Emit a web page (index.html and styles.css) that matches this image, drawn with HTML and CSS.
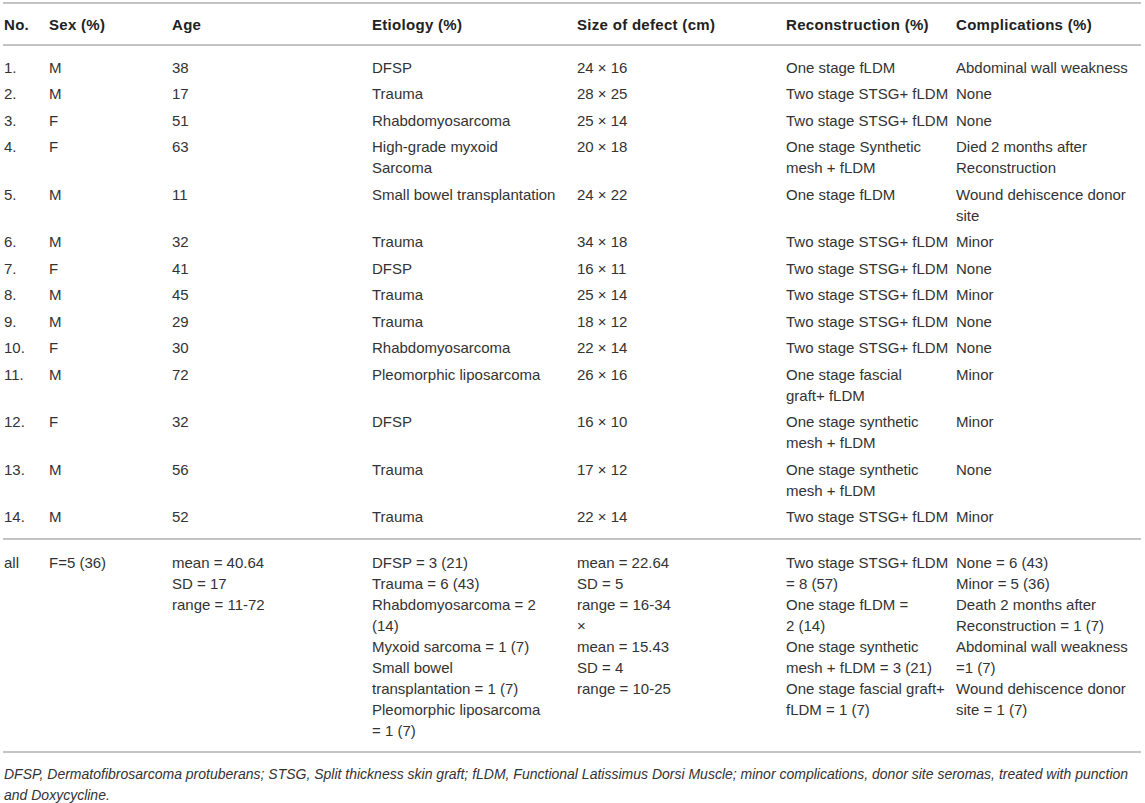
FILE: index.html
```html
<!DOCTYPE html>
<html lang="en">
<head>
    <meta charset="UTF-8">
    <meta name="viewport" content="width=device-width, initial-scale=1.0">
    <title>Patients and reconstruction</title>
    <link rel="stylesheet" href="styles.css">
</head>
<body>
    <div class="table-wrap">
        <table class="data-table">
            <colgroup>
                <col class="c-no">
                <col class="c-sex">
                <col class="c-age">
                <col class="c-etio">
                <col class="c-size">
                <col class="c-recon">
                <col class="c-comp">
            </colgroup>
            <thead>
                <tr>
                    <th>No.</th>
                    <th>Sex (%)</th>
                    <th>Age</th>
                    <th>Etiology (%)</th>
                    <th>Size of defect (cm)</th>
                    <th>Reconstruction (%)</th>
                    <th>Complications (%)</th>
                </tr>
            </thead>
            <tbody>
                <tr class="first">
                    <td>1.</td><td>M</td><td>38</td><td>DFSP</td><td>24 × 16</td>
                    <td>One stage fLDM</td><td>Abdominal wall weakness</td>
                </tr>
                <tr>
                    <td>2.</td><td>M</td><td>17</td><td>Trauma</td><td>28 × 25</td>
                    <td>Two stage STSG+ fLDM</td><td>None</td>
                </tr>
                <tr>
                    <td>3.</td><td>F</td><td>51</td><td>Rhabdomyosarcoma</td><td>25 × 14</td>
                    <td>Two stage STSG+ fLDM</td><td>None</td>
                </tr>
                <tr>
                    <td>4.</td><td>F</td><td>63</td><td>High-grade myxoid<br>Sarcoma</td><td>20 × 18</td>
                    <td>One stage Synthetic<br>mesh + fLDM</td><td>Died 2 months after<br>Reconstruction</td>
                </tr>
                <tr>
                    <td>5.</td><td>M</td><td>11</td><td>Small bowel transplantation</td><td>24 × 22</td>
                    <td>One stage fLDM</td><td>Wound dehiscence donor<br>site</td>
                </tr>
                <tr>
                    <td>6.</td><td>M</td><td>32</td><td>Trauma</td><td>34 × 18</td>
                    <td>Two stage STSG+ fLDM</td><td>Minor</td>
                </tr>
                <tr>
                    <td>7.</td><td>F</td><td>41</td><td>DFSP</td><td>16 × 11</td>
                    <td>Two stage STSG+ fLDM</td><td>None</td>
                </tr>
                <tr>
                    <td>8.</td><td>M</td><td>45</td><td>Trauma</td><td>25 × 14</td>
                    <td>Two stage STSG+ fLDM</td><td>Minor</td>
                </tr>
                <tr>
                    <td>9.</td><td>M</td><td>29</td><td>Trauma</td><td>18 × 12</td>
                    <td>Two stage STSG+ fLDM</td><td>None</td>
                </tr>
                <tr>
                    <td>10.</td><td>F</td><td>30</td><td>Rhabdomyosarcoma</td><td>22 × 14</td>
                    <td>Two stage STSG+ fLDM</td><td>None</td>
                </tr>
                <tr>
                    <td>11.</td><td>M</td><td>72</td><td>Pleomorphic liposarcoma</td><td>26 × 16</td>
                    <td>One stage fascial<br>graft+ fLDM</td><td>Minor</td>
                </tr>
                <tr>
                    <td>12.</td><td>F</td><td>32</td><td>DFSP</td><td>16 × 10</td>
                    <td>One stage synthetic<br>mesh + fLDM</td><td>Minor</td>
                </tr>
                <tr>
                    <td>13.</td><td>M</td><td>56</td><td>Trauma</td><td>17 × 12</td>
                    <td>One stage synthetic<br>mesh + fLDM</td><td>None</td>
                </tr>
                <tr class="last">
                    <td>14.</td><td>M</td><td>52</td><td>Trauma</td><td>22 × 14</td>
                    <td>Two stage STSG+ fLDM</td><td>Minor</td>
                </tr>
            </tbody>
            <tbody class="summary">
                <tr>
                    <td>all</td>
                    <td>F=5 (36)</td>
                    <td>mean = 40.64<br>SD = 17<br>range = 11-72</td>
                    <td>DFSP = 3 (21)<br>Trauma = 6 (43)<br>Rhabdomyosarcoma = 2<br>(14)<br>Myxoid sarcoma = 1 (7)<br>Small bowel<br>transplantation = 1 (7)<br>Pleomorphic liposarcoma<br>= 1 (7)</td>
                    <td>mean = 22.64<br>SD = 5<br>range = 16-34<br>×<br>mean = 15.43<br>SD = 4<br>range = 10-25</td>
                    <td>Two stage STSG+ fLDM<br>= 8 (57)<br>One stage fLDM =<br>2 (14)<br>One stage synthetic<br>mesh + fLDM = 3 (21)<br>One stage fascial graft+<br>fLDM = 1 (7)</td>
                    <td>None = 6 (43)<br>Minor = 5 (36)<br>Death 2 months after<br>Reconstruction = 1 (7)<br>Abdominal wall weakness<br>=1 (7)<br>Wound dehiscence donor<br>site = 1 (7)</td>
                </tr>
            </tbody>
        </table>
        <p class="footnote">DFSP, Dermatofibrosarcoma protuberans; STSG, Split thickness skin graft; fLDM, Functional Latissimus Dorsi Muscle; minor complications, donor site seromas, treated with punction and Doxycycline.</p>
    </div>
</body>
</html>
```

FILE: styles.css
```css
body {
    margin: 0;
    background-color: #ffffff;
    color: #333333;
    font-family: "Liberation Sans", Arial, sans-serif;
    font-size: 15px;
}
.table-wrap {
    padding: 2px 4px 0 3px;
}
.data-table {
    width: 1138px;
    border-collapse: collapse;
    table-layout: fixed;
    line-height: 21px;
}
.c-no { width: 45px; }
.c-sex { width: 123px; }
.c-age { width: 200px; }
.c-etio { width: 205px; }
.c-size { width: 209px; }
.c-recon { width: 170px; }
.c-comp { width: 186px; }
.data-table th {
    text-align: left;
    font-weight: bold;
    letter-spacing: 0.3px;
    color: #222222;
    padding: 9.5px 0 9.5px 1px;
    border-top: 2px solid #c4c4c4;
    border-bottom: 2px solid #c4c4c4;
    white-space: nowrap;
}
.data-table td {
    vertical-align: top;
    padding: 3px 0 2.5px 1px;
    white-space: nowrap;
}
.data-table tr.first td {
    padding-top: 10.5px;
}
.data-table tr.last td {
    padding-bottom: 11px;
}
.summary td {
    border-top: 2px solid #c4c4c4;
    border-bottom: 2px solid #c4c4c4;
    padding-top: 11.5px;
    padding-bottom: 10px;
}
.footnote {
    margin: 11px 0 0 1px;
    font-size: 14px;
    font-style: italic;
    line-height: 21px;
    color: #333333;
}
```
